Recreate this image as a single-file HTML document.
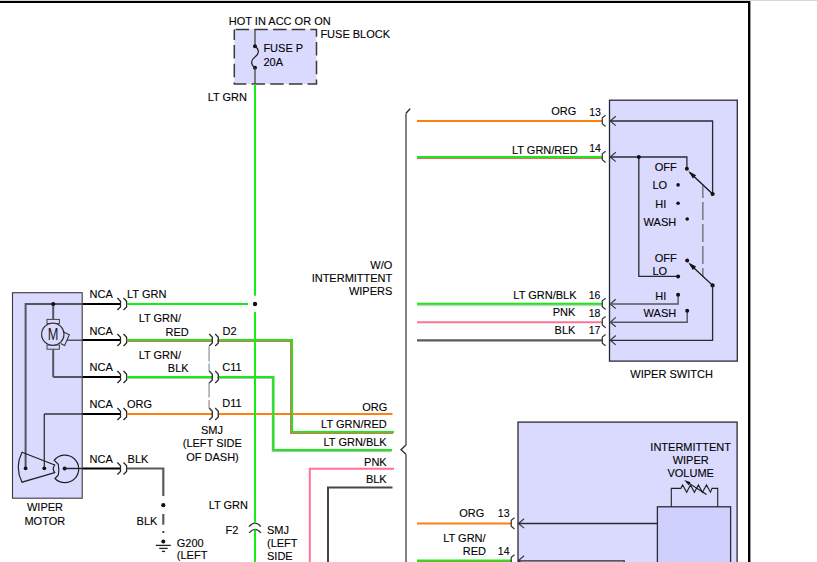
<!DOCTYPE html><html><head><meta charset="utf-8"><style>html,body{margin:0;padding:0;background:#fff;overflow:hidden}svg{display:block}text{font-family:"Liberation Sans",sans-serif;fill:#000;stroke:#000;stroke-width:0.1px}</style></head><body>
<svg width="817" height="562" viewBox="0 0 817 562">
<rect x="0" y="0" width="817" height="1" fill="#d6d6d6"/>
<rect x="0" y="1" width="750" height="2" fill="#000"/>
<rect x="748" y="1" width="2.4" height="561" fill="#000"/>
<rect x="234.3" y="29.4" width="82.2" height="54.6" fill="#dadaff"/>
<path d="M234.3,29.4 H316.5 V84 H234.3 Z" fill="none" stroke="#3a3a3a" stroke-width="1.5" stroke-dasharray="13.5 5.2" stroke-dashoffset="17.4"/>
<line x1="255" y1="29.4" x2="255" y2="46.3" stroke="#444" stroke-width="1.3" />
<circle cx="255" cy="46.3" r="2" fill="#111"/>
<circle cx="255" cy="67.7" r="2" fill="#111"/>
<path d="M255,46.3 C260,50 259,54 255,57 C251,60 250,64 255,67.7" fill="none" stroke="#222" stroke-width="1.2"/>
<line x1="255" y1="67.7" x2="255" y2="84" stroke="#444" stroke-width="1.3" />
<text x="228.8" y="25" text-anchor="start" font-size="11">HOT IN ACC OR ON</text>
<text x="320.4" y="38.2" text-anchor="start" font-size="11">FUSE BLOCK</text>
<text x="263.4" y="51.6" text-anchor="start" font-size="11">FUSE P</text>
<text x="263.4" y="65.6" text-anchor="start" font-size="11">20A</text>
<text x="247" y="100.8" text-anchor="end" font-size="11">LT GRN</text>
<circle cx="255" cy="304" r="2.2" fill="#111"/>
<path d="M249.1,526.6 Q252,523.2 255,523.2 Q258,523.2 260.8,526.6" fill="none" stroke="#333" stroke-width="1.3"/>
<path d="M249.1,532.8 Q252,529.4 255,529.4 Q258,529.4 260.8,532.8" fill="none" stroke="#333" stroke-width="1.3"/>
<rect x="12.5" y="292.7" width="69.7" height="205.5" fill="#dadaff" stroke="#3a3a44" stroke-width="1.1" />
<polyline points="82,304 25.6,304 25.6,468.3" fill="none" stroke="#55555f" stroke-width="2" stroke-linejoin="miter" />
<polyline points="53.2,304 53.2,319.5" fill="none" stroke="#55555f" stroke-width="2" stroke-linejoin="miter" />
<circle cx="53.2" cy="304" r="2.1" fill="#111"/>
<rect x="47" y="319.4" width="12.4" height="4.2" fill="none" stroke="#444" stroke-width="1" />
<rect x="47" y="345" width="12.4" height="4.2" fill="none" stroke="#444" stroke-width="1" />
<line x1="53.2" y1="349" x2="53.2" y2="377" stroke="#55555f" stroke-width="2" />
<polyline points="53.2,377 82,377" fill="none" stroke="#55555f" stroke-width="2" stroke-linejoin="miter" />
<circle cx="52.8" cy="334.25" r="11.2" fill="#dadaff" stroke="#333" stroke-width="1.2"/>
<text x="53.2" y="340" text-anchor="middle" font-size="16" transform="translate(53.2,0) scale(0.8,1) translate(-53.2,0)" style="stroke:none;fill:#1a1a2a">M</text>
<polyline points="63.7,332.1 69.3,334.7 64.6,345.6 60.7,343.6" fill="none" stroke="#333" stroke-width="1.1" stroke-linejoin="miter" />
<line x1="67" y1="340.2" x2="82" y2="340.2" stroke="#333" stroke-width="1.2" />
<path d="M22,452.2 L54.7,465 Q51.8,468.7 54.7,472.6 L22,482.2 Q14.5,467.2 22,452.2 Z" fill="none" stroke="#222" stroke-width="1.2"/>
<line x1="44.3" y1="414" x2="44.3" y2="468.3" stroke="#333" stroke-width="1.3" />
<polyline points="44.3,414 82,414" fill="none" stroke="#333" stroke-width="1.3" stroke-linejoin="miter" />
<circle cx="25.6" cy="468.3" r="1.9" fill="#111"/>
<circle cx="44.3" cy="468.3" r="1.9" fill="#111"/>
<path d="M54.1,460.3 A13.8,13.8 0 1 1 55,478.5 L58.3,475 Q59.3,469.7 58.3,464.4 Z" fill="none" stroke="#222" stroke-width="1.2"/>
<circle cx="64.6" cy="468.5" r="2" fill="#111"/>
<line x1="64.6" y1="468.5" x2="82" y2="468.5" stroke="#222" stroke-width="1.4" />
<text x="45" y="510.9" text-anchor="middle" font-size="11">WIPER</text>
<text x="44.8" y="524.7" text-anchor="middle" font-size="11">MOTOR</text>
<line x1="82.5" y1="304" x2="120.5" y2="304" stroke="#000" stroke-width="2.2" />
<polyline points="117.4,298 120.5,301.2 120.5,307 117.4,310" fill="none" stroke="#222" stroke-width="1.25" stroke-linejoin="miter" />
<polyline points="123.5,298 126.6,301.2 126.6,307 123.5,310" fill="none" stroke="#222" stroke-width="1.25" stroke-linejoin="miter" />
<line x1="82.5" y1="340" x2="120.5" y2="340" stroke="#000" stroke-width="2.2" />
<polyline points="117.4,334 120.5,337.2 120.5,343 117.4,346" fill="none" stroke="#222" stroke-width="1.25" stroke-linejoin="miter" />
<polyline points="123.5,334 126.6,337.2 126.6,343 123.5,346" fill="none" stroke="#222" stroke-width="1.25" stroke-linejoin="miter" />
<line x1="82.5" y1="377" x2="120.5" y2="377" stroke="#000" stroke-width="2.2" />
<polyline points="117.4,371 120.5,374.2 120.5,380 117.4,383" fill="none" stroke="#222" stroke-width="1.25" stroke-linejoin="miter" />
<polyline points="123.5,371 126.6,374.2 126.6,380 123.5,383" fill="none" stroke="#222" stroke-width="1.25" stroke-linejoin="miter" />
<line x1="82.5" y1="414" x2="120.5" y2="414" stroke="#000" stroke-width="2.2" />
<polyline points="117.4,408 120.5,411.2 120.5,417 117.4,420" fill="none" stroke="#222" stroke-width="1.25" stroke-linejoin="miter" />
<polyline points="123.5,408 126.6,411.2 126.6,417 123.5,420" fill="none" stroke="#222" stroke-width="1.25" stroke-linejoin="miter" />
<line x1="82.5" y1="468.5" x2="120.5" y2="468.5" stroke="#000" stroke-width="2.2" />
<polyline points="117.4,462.5 120.5,465.7 120.5,471.5 117.4,474.5" fill="none" stroke="#222" stroke-width="1.25" stroke-linejoin="miter" />
<polyline points="123.5,462.5 126.6,465.7 126.6,471.5 123.5,474.5" fill="none" stroke="#222" stroke-width="1.25" stroke-linejoin="miter" />
<text x="89.5" y="297.6" text-anchor="start" font-size="11">NCA</text>
<text x="89.5" y="334.6" text-anchor="start" font-size="11">NCA</text>
<text x="89.5" y="370.8" text-anchor="start" font-size="11">NCA</text>
<text x="89.5" y="407.5" text-anchor="start" font-size="11">NCA</text>
<text x="89.5" y="462.9" text-anchor="start" font-size="11">NCA</text>
<line x1="126.8" y1="304" x2="248" y2="304" stroke="#14ee14" stroke-width="2" />
<text x="127" y="297.6" text-anchor="start" font-size="11">LT GRN</text>
<text x="138.7" y="321.8" text-anchor="start" font-size="11">LT GRN/</text>
<text x="165.6" y="335.8" text-anchor="start" font-size="11">RED</text>
<text x="138.7" y="358.8" text-anchor="start" font-size="11">LT GRN/</text>
<text x="167.8" y="372.3" text-anchor="start" font-size="11">BLK</text>
<text x="127" y="407.5" text-anchor="start" font-size="11">ORG</text>
<text x="127.6" y="462.5" text-anchor="start" font-size="11">BLK</text>
<line x1="126.8" y1="414" x2="212.4" y2="414" stroke="#ff7f10" stroke-width="2" />
<line x1="218.4" y1="414" x2="392.5" y2="414" stroke="#ff7f10" stroke-width="2" />
<polyline points="126.8,341 212.4,341" fill="none" stroke="#ff5a66" stroke-width="2" stroke-linejoin="miter" />
<polyline points="126.8,340 212.4,340" fill="none" stroke="#14ee14" stroke-width="2" stroke-linejoin="miter" />
<polyline points="217.4,341 291,341 291,433 393,433" fill="none" stroke="#ff5a66" stroke-width="2" stroke-linejoin="miter" />
<polyline points="218.4,340 292,340 292,432 394,432" fill="none" stroke="#14ee14" stroke-width="2" stroke-linejoin="miter" />
<polyline points="126.8,377.8 212.4,377.8" fill="none" stroke="#a0a8a0" stroke-width="2" stroke-linejoin="miter" />
<polyline points="126.8,377 212.4,377" fill="none" stroke="#14ee14" stroke-width="2" stroke-linejoin="miter" />
<polyline points="217.70000000000002,377.7 272.8,377.7 272.8,450.7 391.3,450.7" fill="none" stroke="#a0a0a8" stroke-width="2" stroke-linejoin="miter" />
<polyline points="218.4,377 273.5,377 273.5,450 392,450" fill="none" stroke="#14ee14" stroke-width="2" stroke-linejoin="miter" />
<line x1="255" y1="84" x2="255" y2="295.7" stroke="#14ee14" stroke-width="2" />
<line x1="255" y1="311.9" x2="255" y2="523.3" stroke="#14ee14" stroke-width="2" />
<line x1="255" y1="529.5" x2="255" y2="562" stroke="#14ee14" stroke-width="2" />
<line x1="209.1" y1="346.4" x2="209.1" y2="361.5" stroke="#b4b4b4" stroke-width="1.8" />
<line x1="209.1" y1="363.5" x2="209.1" y2="371.2" stroke="#b4b4b4" stroke-width="1.8" />
<line x1="209.1" y1="382.8" x2="209.1" y2="397.5" stroke="#b4b4b4" stroke-width="1.8" />
<line x1="209.1" y1="400" x2="209.1" y2="408.2" stroke="#b4b4b4" stroke-width="1.8" />
<polyline points="209.2,334 212.29999999999998,337.2 212.29999999999998,343 209.2,346" fill="none" stroke="#333" stroke-width="1.4" stroke-linejoin="miter" />
<polyline points="215.2,334 218.29999999999998,337.2 218.29999999999998,343 215.2,346" fill="none" stroke="#333" stroke-width="1.4" stroke-linejoin="miter" />
<polyline points="209.2,371 212.29999999999998,374.2 212.29999999999998,380 209.2,383" fill="none" stroke="#333" stroke-width="1.4" stroke-linejoin="miter" />
<polyline points="215.2,371 218.29999999999998,374.2 218.29999999999998,380 215.2,383" fill="none" stroke="#333" stroke-width="1.4" stroke-linejoin="miter" />
<polyline points="209.2,408 212.29999999999998,411.2 212.29999999999998,417 209.2,420" fill="none" stroke="#333" stroke-width="1.4" stroke-linejoin="miter" />
<polyline points="215.2,408 218.29999999999998,411.2 218.29999999999998,417 215.2,420" fill="none" stroke="#333" stroke-width="1.4" stroke-linejoin="miter" />
<text x="222.6" y="334.6" text-anchor="start" font-size="11">D2</text>
<text x="222.3" y="370.9" text-anchor="start" font-size="11">C11</text>
<text x="222.3" y="406.5" text-anchor="start" font-size="11">D11</text>
<text x="212" y="433.7" text-anchor="middle" font-size="11">SMJ</text>
<text x="212.3" y="447.1" text-anchor="middle" font-size="11">(LEFT SIDE</text>
<text x="212.5" y="460.5" text-anchor="middle" font-size="11">OF DASH)</text>
<polyline points="126.8,468.5 163.3,468.5 163.3,496" fill="none" stroke="#5a5a5a" stroke-width="2.2" stroke-linejoin="miter" />
<circle cx="163.3" cy="505.2" r="2.1" fill="#111"/>
<line x1="163.3" y1="514" x2="163.3" y2="524.7" stroke="#5a5a5a" stroke-width="2.2" />
<rect x="162.3" y="531" width="2" height="2" fill="#444"/>
<circle cx="163.3" cy="541.6" r="2" fill="#111"/>
<line x1="155.8" y1="545.4" x2="170.8" y2="545.4" stroke="#222" stroke-width="1.3" />
<line x1="159.2" y1="548.4" x2="167.7" y2="548.4" stroke="#222" stroke-width="1.3" />
<line x1="161.9" y1="551.4" x2="165" y2="551.4" stroke="#222" stroke-width="1.3" />
<text x="136.6" y="524.8" text-anchor="start" font-size="11">BLK</text>
<text x="176.8" y="546.6" text-anchor="start" font-size="11">G200</text>
<text x="176.8" y="559.4" text-anchor="start" font-size="11">(LEFT</text>
<text x="208.7" y="508.7" text-anchor="start" font-size="11">LT GRN</text>
<text x="225.5" y="534.3" text-anchor="start" font-size="11">F2</text>
<text x="267" y="534.3" text-anchor="start" font-size="11">SMJ</text>
<text x="267" y="547.3" text-anchor="start" font-size="11">(LEFT</text>
<text x="267" y="560.4" text-anchor="start" font-size="11">SIDE</text>
<polyline points="394,468.8 309.8,468.8 309.8,562" fill="none" stroke="#ff7396" stroke-width="2" stroke-linejoin="miter" />
<polyline points="392.5,487.5 328,487.5 328,562" fill="none" stroke="#454545" stroke-width="2" stroke-linejoin="miter" />
<text x="392.3" y="268.7" text-anchor="end" font-size="11">W/O</text>
<text x="392.3" y="282" text-anchor="end" font-size="11">INTERMITTENT</text>
<text x="392.3" y="294.5" text-anchor="end" font-size="11">WIPERS</text>
<text x="387.3" y="410.7" text-anchor="end" font-size="11">ORG</text>
<text x="386.7" y="428" text-anchor="end" font-size="11">LT GRN/RED</text>
<text x="386.7" y="446.2" text-anchor="end" font-size="11">LT GRN/BLK</text>
<text x="386.7" y="466.1" text-anchor="end" font-size="11">PNK</text>
<text x="386.7" y="482.8" text-anchor="end" font-size="11">BLK</text>
<line x1="406" y1="113.5" x2="406" y2="445" stroke="#6e6e6e" stroke-width="1.7" />
<line x1="406" y1="454.3" x2="406" y2="562" stroke="#6e6e6e" stroke-width="1.7" />
<polyline points="410.2,108.6 406,113.3" fill="none" stroke="#222" stroke-width="1.4" stroke-linejoin="miter" />
<polyline points="406,445 401,449.7 406,454.3" fill="none" stroke="#333" stroke-width="1.4" stroke-linejoin="miter" />
<rect x="609.5" y="100.2" width="127.8" height="260.9" fill="#dadaff" stroke="#2a2a35" stroke-width="1.3" />
<line x1="417" y1="121" x2="602.5" y2="121" stroke="#ff7f10" stroke-width="2" />
<polyline points="417,158 602.5,158" fill="none" stroke="#ff5a66" stroke-width="2" stroke-linejoin="miter" />
<polyline points="417,157 602.5,157" fill="none" stroke="#14ee14" stroke-width="2" stroke-linejoin="miter" />
<line x1="417" y1="305" x2="602.5" y2="305" stroke="#9a9a9a" stroke-width="1" />
<line x1="417" y1="303.8" x2="602.5" y2="303.8" stroke="#14ee14" stroke-width="2" />
<line x1="417" y1="322.2" x2="602.5" y2="322.2" stroke="#ff7396" stroke-width="2" />
<line x1="417" y1="340.3" x2="602.5" y2="340.3" stroke="#5a5a5a" stroke-width="2.2" />
<polyline points="605.6,115.3 602.3000000000001,117.8 602.3000000000001,123.8 605.6,126.5" fill="none" stroke="#333" stroke-width="1.2" stroke-linejoin="miter" />
<polyline points="615.8000000000001,116.2 610.2,121 615.8000000000001,125.6" fill="none" stroke="#3a3a44" stroke-width="1.2" stroke-linejoin="miter" />
<polyline points="605.6,151.3 602.3000000000001,153.8 602.3000000000001,159.8 605.6,162.5" fill="none" stroke="#333" stroke-width="1.2" stroke-linejoin="miter" />
<polyline points="615.8000000000001,152.2 610.2,157 615.8000000000001,161.6" fill="none" stroke="#3a3a44" stroke-width="1.2" stroke-linejoin="miter" />
<polyline points="605.6,298.3 602.3000000000001,300.8 602.3000000000001,306.8 605.6,309.5" fill="none" stroke="#333" stroke-width="1.2" stroke-linejoin="miter" />
<polyline points="615.8000000000001,299.2 610.2,304 615.8000000000001,308.6" fill="none" stroke="#3a3a44" stroke-width="1.2" stroke-linejoin="miter" />
<polyline points="605.6,316.5 602.3000000000001,319.0 602.3000000000001,325.0 605.6,327.7" fill="none" stroke="#333" stroke-width="1.2" stroke-linejoin="miter" />
<polyline points="615.8000000000001,317.4 610.2,322.2 615.8000000000001,326.8" fill="none" stroke="#3a3a44" stroke-width="1.2" stroke-linejoin="miter" />
<polyline points="605.6,334.6 602.3000000000001,337.1 602.3000000000001,343.1 605.6,345.8" fill="none" stroke="#333" stroke-width="1.2" stroke-linejoin="miter" />
<polyline points="615.8000000000001,335.5 610.2,340.3 615.8000000000001,344.90000000000003" fill="none" stroke="#3a3a44" stroke-width="1.2" stroke-linejoin="miter" />
<text x="576.3" y="115.4" text-anchor="end" font-size="11">ORG</text>
<text x="589.2" y="115.5" text-anchor="start" font-size="10.5">13</text>
<text x="577.6" y="153.7" text-anchor="end" font-size="11">LT GRN/RED</text>
<text x="589.2" y="151.8" text-anchor="start" font-size="10.5">14</text>
<text x="576.5" y="299" text-anchor="end" font-size="11">LT GRN/BLK</text>
<text x="588.7" y="299" text-anchor="start" font-size="10.5">16</text>
<text x="575.4" y="316.2" text-anchor="end" font-size="11">PNK</text>
<text x="588.7" y="316.8" text-anchor="start" font-size="10.5">18</text>
<text x="575.4" y="333.8" text-anchor="end" font-size="11">BLK</text>
<text x="588.7" y="334.4" text-anchor="start" font-size="10.5">17</text>
<polyline points="610.5,121 712.6,121 712.6,194" fill="none" stroke="#2a2a30" stroke-width="1.3" stroke-linejoin="miter" />
<polyline points="610.5,157 686.9,157 686.9,168.8" fill="none" stroke="#2a2a30" stroke-width="1.3" stroke-linejoin="miter" />
<polyline points="638.8,157 638.8,276.4 678.1,276.4" fill="none" stroke="#2a2a30" stroke-width="1.3" stroke-linejoin="miter" />
<circle cx="638.8" cy="157" r="2" fill="#111"/>
<circle cx="686.9" cy="168.8" r="2" fill="#111"/>
<circle cx="712.6" cy="194" r="2.1" fill="#111"/>
<circle cx="678.1" cy="184.9" r="1.8" fill="#111"/>
<circle cx="678.1" cy="203.3" r="1.8" fill="#111"/>
<circle cx="687.2" cy="219" r="1.8" fill="#111"/>
<line x1="712.6" y1="194" x2="690" y2="172.8" stroke="#111" stroke-width="1.3" />
<path d="M688.3,171.1 L696.1,175.2 L692.9,178.6 Z" fill="#111"/>
<line x1="702.9" y1="184" x2="702.9" y2="277" stroke="#333" stroke-width="0.9" stroke-dasharray="18 4" stroke-dashoffset="4"/>
<text x="654.8" y="170.8" text-anchor="start" font-size="11">OFF</text>
<text x="652.4" y="189.4" text-anchor="start" font-size="11">LO</text>
<text x="655.3" y="207.6" text-anchor="start" font-size="11">HI</text>
<text x="643.6" y="225.7" text-anchor="start" font-size="11">WASH</text>
<circle cx="687.2" cy="260.4" r="2" fill="#111"/>
<circle cx="712.6" cy="285.4" r="2.1" fill="#111"/>
<circle cx="678.1" cy="276.4" r="2" fill="#111"/>
<line x1="712.6" y1="285.4" x2="690" y2="264.2" stroke="#111" stroke-width="1.3" />
<path d="M688.3,262.5 L696.1,266.6 L692.9,270 Z" fill="#111"/>
<polyline points="678.1,294.8 678.1,304 610.5,304" fill="none" stroke="#55555f" stroke-width="1.4" stroke-linejoin="miter" />
<circle cx="678.1" cy="294.8" r="2" fill="#111"/>
<polyline points="687.2,310.8 687.2,322.2 610.5,322.2" fill="none" stroke="#55555f" stroke-width="1.4" stroke-linejoin="miter" />
<circle cx="687.2" cy="310.8" r="2" fill="#111"/>
<polyline points="712.6,285.4 712.6,340.3 610.5,340.3" fill="none" stroke="#2a2a30" stroke-width="1.3" stroke-linejoin="miter" />
<text x="654.8" y="261.6" text-anchor="start" font-size="11">OFF</text>
<text x="652.4" y="274.5" text-anchor="start" font-size="11">LO</text>
<text x="655.3" y="299.6" text-anchor="start" font-size="11">HI</text>
<text x="643.6" y="316.6" text-anchor="start" font-size="11">WASH</text>
<text x="671.6" y="378.1" text-anchor="middle" font-size="11">WIPER SWITCH</text>
<rect x="518" y="422.1" width="219.1" height="150" fill="#dadaff" stroke="#2a2a35" stroke-width="1.3" />
<rect x="657.4" y="506.8" width="73.2" height="70" fill="#d0d0ff" stroke="#2a2a35" stroke-width="1.3" />
<text x="690.7" y="450.8" text-anchor="middle" font-size="11">INTERMITTENT</text>
<text x="690.7" y="463.7" text-anchor="middle" font-size="11">WIPER</text>
<text x="690.7" y="476.5" text-anchor="middle" font-size="11">VOLUME</text>
<polyline points="671.3,506.8 671.3,488.4 680.8,488.4 682.6,484.9 686.7,492.3 690.4,484.9 694.4,492.3 698.4,484.9 702.4,492.3 706.5,484.9 710.5,492.3 712,488.4 717.7,488.4 717.7,506.8" fill="none" stroke="#222" stroke-width="1.1" stroke-linejoin="miter" />
<line x1="706.5" y1="494.5" x2="688" y2="482.6" stroke="#111" stroke-width="1.1" />
<path d="M684.2,480.1 L690.5,482.2 L688.6,485.2 Z" fill="#111"/>
<line x1="417" y1="523.5" x2="511.5" y2="523.5" stroke="#ff7f10" stroke-width="2" />
<polyline points="417,561.5 511.5,561.5" fill="none" stroke="#ff5a66" stroke-width="2" stroke-linejoin="miter" />
<polyline points="417,560.5 511.5,560.5" fill="none" stroke="#14ee14" stroke-width="2" stroke-linejoin="miter" />
<polyline points="514.5,517.8 511.2,520.3 511.2,526.3 514.5,529.0" fill="none" stroke="#333" stroke-width="1.2" stroke-linejoin="miter" />
<polyline points="524.1,518.7 518.5,523.5 524.1,528.1" fill="none" stroke="#3a3a44" stroke-width="1.2" stroke-linejoin="miter" />
<polyline points="514.5,554.8 511.2,557.3 511.2,563.3 514.5,566.0" fill="none" stroke="#333" stroke-width="1.2" stroke-linejoin="miter" />
<polyline points="524.1,555.7 518.5,560.5 524.1,565.1" fill="none" stroke="#3a3a44" stroke-width="1.2" stroke-linejoin="miter" />
<line x1="518.5" y1="523.5" x2="657.4" y2="523.5" stroke="#2a2a30" stroke-width="1.3" />
<polyline points="518.5,560.8 624.2,560.8 624.2,564" fill="none" stroke="#2a2a30" stroke-width="1.3" stroke-linejoin="miter" />
<text x="484.2" y="516.7" text-anchor="end" font-size="11">ORG</text>
<text x="497.8" y="516.7" text-anchor="start" font-size="10.5">13</text>
<text x="485.6" y="541.7" text-anchor="end" font-size="11">LT GRN/</text>
<text x="486" y="554.6" text-anchor="end" font-size="11">RED</text>
<text x="497.8" y="554.6" text-anchor="start" font-size="10.5">14</text>
</svg></body></html>
